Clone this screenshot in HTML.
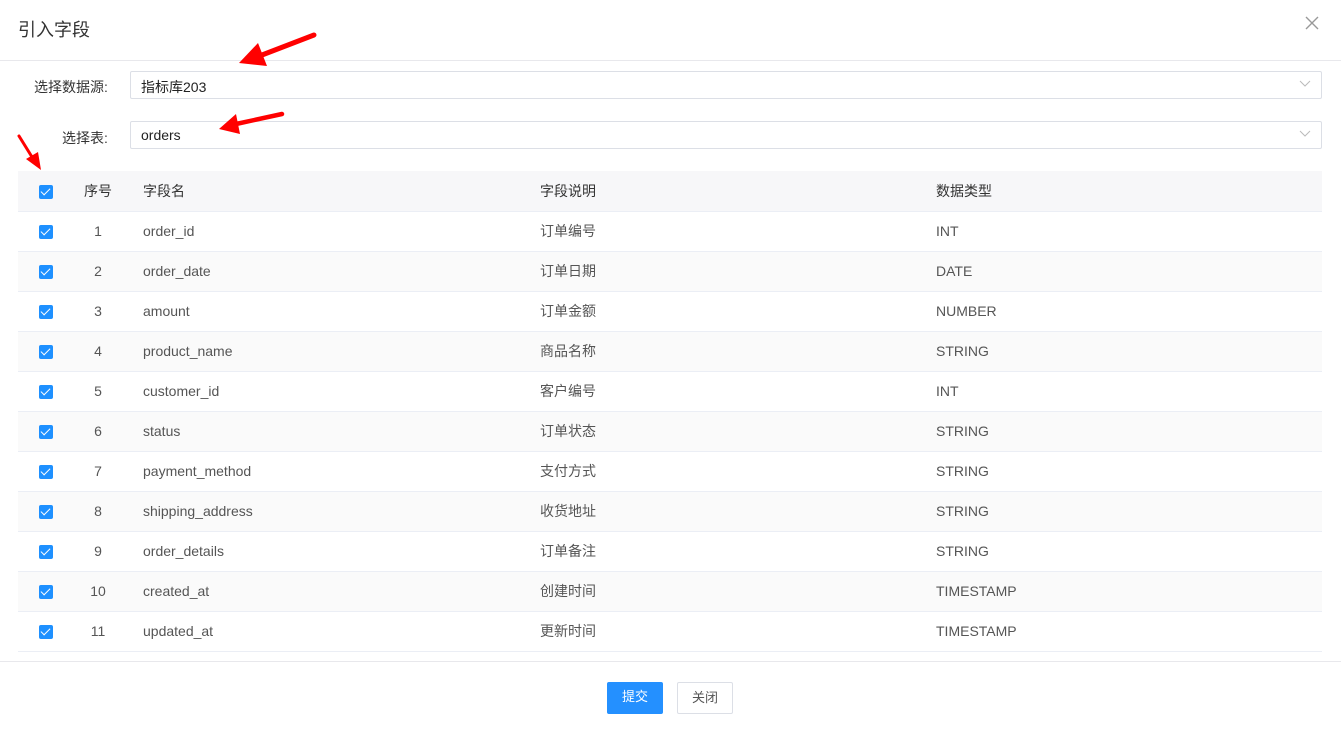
<!DOCTYPE html>
<html><head><meta charset="utf-8"><style>
*{box-sizing:border-box;margin:0;padding:0}
body{width:1341px;height:732px;background:#fff;font-family:"Liberation Sans","Noto Sans CJK SC",sans-serif;position:relative;overflow:hidden;color:#333}
.title{position:absolute;left:18px;top:16px;font-size:18px;color:#333}
.close{position:absolute;left:1304px;top:15px}
.hl{position:absolute;left:0;width:1341px;height:1px;background:#e8e8ec}
.lab{position:absolute;font-size:14px;color:#333}
.sel{position:absolute;left:130px;width:1192px;height:28px;border:1px solid #dcdfe6;border-radius:2px;font-size:14px;color:#222;padding:5px 10px}
.sel svg{position:absolute;right:10px;top:8px}
table{position:absolute;left:18px;top:171px;width:1304px;border-collapse:collapse;font-size:14px;table-layout:fixed}
td{height:40px;border-bottom:1px solid #ebeef5;color:#555;padding:0}
tr.h td{background:#f7f7f9;color:#333}
tr:nth-child(odd):not(.h) td{background:#fafafa}
.cb{display:inline-block;width:14px;height:14px;background:#1e90ff;border-radius:2px;position:relative;vertical-align:middle}
.cb:after{content:"";position:absolute;left:4px;top:1px;width:4px;height:8px;border:solid #fff;border-width:0 1.5px 1.5px 0;transform:rotate(45deg)}
.c0{padding-left:21px}.c1{text-align:center}.c2{padding-left:21px!important}
.btn{position:absolute;top:682px;height:32px;font-size:13px;text-align:center;line-height:30px;border-radius:2px}
</style></head><body>
<div class="title">引入字段</div>
<svg class="close" width="16" height="16"><path d="M2 2L14 14M14 2L2 14" stroke="#999" stroke-width="1.4"/></svg>
<div class="hl" style="top:60px"></div>
<div class="lab" style="left:34px;top:77px">选择数据源:</div>
<div class="sel" style="top:71px">指标库203<svg width="12" height="8"><path d="M1 1L6 6L11 1" stroke="#bbb" fill="none"/></svg></div>
<div class="lab" style="left:62px;top:128px">选择表:</div>
<div class="sel" style="top:121px">orders<svg width="12" height="8"><path d="M1 1L6 6L11 1" stroke="#bbb" fill="none"/></svg></div>
<table>
<colgroup><col style="width:56px"><col style="width:48px"><col style="width:418px"><col style="width:396px"><col></colgroup>
<tr class="h"><td class="c0"><span class="cb"></span></td><td class="c1">序号</td><td class="c2">字段名</td><td>字段说明</td><td>数据类型</td></tr>
<tr><td class="c0"><span class="cb"></span></td><td class="c1">1</td><td class="c2">order_id</td><td>订单编号</td><td>INT</td></tr>
<tr><td class="c0"><span class="cb"></span></td><td class="c1">2</td><td class="c2">order_date</td><td>订单日期</td><td>DATE</td></tr>
<tr><td class="c0"><span class="cb"></span></td><td class="c1">3</td><td class="c2">amount</td><td>订单金额</td><td>NUMBER</td></tr>
<tr><td class="c0"><span class="cb"></span></td><td class="c1">4</td><td class="c2">product_name</td><td>商品名称</td><td>STRING</td></tr>
<tr><td class="c0"><span class="cb"></span></td><td class="c1">5</td><td class="c2">customer_id</td><td>客户编号</td><td>INT</td></tr>
<tr><td class="c0"><span class="cb"></span></td><td class="c1">6</td><td class="c2">status</td><td>订单状态</td><td>STRING</td></tr>
<tr><td class="c0"><span class="cb"></span></td><td class="c1">7</td><td class="c2">payment_method</td><td>支付方式</td><td>STRING</td></tr>
<tr><td class="c0"><span class="cb"></span></td><td class="c1">8</td><td class="c2">shipping_address</td><td>收货地址</td><td>STRING</td></tr>
<tr><td class="c0"><span class="cb"></span></td><td class="c1">9</td><td class="c2">order_details</td><td>订单备注</td><td>STRING</td></tr>
<tr><td class="c0"><span class="cb"></span></td><td class="c1">10</td><td class="c2">created_at</td><td>创建时间</td><td>TIMESTAMP</td></tr>
<tr><td class="c0"><span class="cb"></span></td><td class="c1">11</td><td class="c2">updated_at</td><td>更新时间</td><td>TIMESTAMP</td></tr>
</table>
<div class="hl" style="top:661px"></div>
<div class="btn" style="left:607px;width:56px;background:#2490ff;color:#fff">提交</div>
<div class="btn" style="left:677px;width:56px;border:1px solid #dcdfe6;color:#555">关闭</div>
<svg style="position:absolute;left:0;top:0" width="340" height="180">
<path d="M314 35L262 55" stroke="#f00" stroke-width="5" stroke-linecap="round"/>
<polygon points="239,63 258,43 267,66" fill="#f00"/>
<path d="M282 114L236 124" stroke="#f00" stroke-width="4.5" stroke-linecap="round"/>
<polygon points="219,129 236,114 240,134" fill="#f00"/>
<path d="M19 136L32 157" stroke="#f00" stroke-width="3" stroke-linecap="round"/>
<polygon points="41,170 26,159 38,152" fill="#f00"/>
</svg>
</body></html>
